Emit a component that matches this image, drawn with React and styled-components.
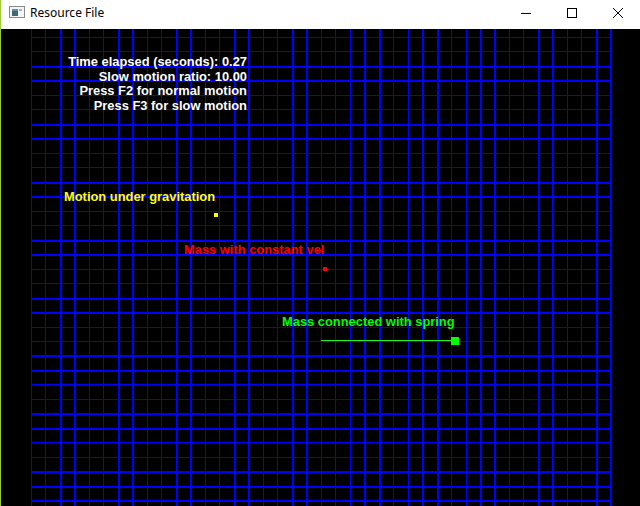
import React from 'react';
import styled, { createGlobalStyle } from 'styled-components';

/* CSS---------------------------------------------------------------------*/
const GlobalStyle = createGlobalStyle`
  html, body {
    margin: 0;
    padding: 0;
    background: #000000;
  }

  body {
    width: 640px;
    height: 506px;
    overflow: hidden;
  }
`;

// The whole window, with its thin accent border on the left
const Window = styled.div`
  width: 640px;
  height: 506px;
  box-sizing: border-box;
  border-left: 1px solid #9acd32;
  display: flex;
  flex-direction: column;
  background: #000000;
`;

const TitleBar = styled.div`
  flex: none;
  height: 29px;
  display: flex;
  align-items: flex-start;
  background: #FFFFFF;
`;

const AppIcon = styled.svg`
  flex: none;
  display: block;
  margin: 6px 0 0 8px;
`;

const Title = styled.div`
  margin: 5px 0 0 5px;
  font-family: "Noto Sans", "Open Sans", sans-serif;
  font-size: 12px;
  line-height: 16px;
  color: #000000;
`;

const Controls = styled.div`
  margin-left: auto;
  display: flex;
`;

const ControlButton = styled.div`
  width: 46px;
  height: 29px;
  box-sizing: border-box;
  padding: ${props => props.$top}px 0 0 19px;

  > svg {
    display: block;
  }
`;

// Black OpenGL-like drawing area under the title bar
const Canvas = styled.div`
  flex: 1;
  position: relative;
  overflow: hidden;
  background: #000000;
`;

const Scene = styled.svg`
  display: block;
  shape-rendering: crispEdges;
`;

// Text drawn on the canvas, placed at its scene coordinates
const Label = styled.div`
  position: absolute;
  left: ${props => props.$x}px;
  top: ${props => props.$y}px;
  color: ${props => props.$color};
  font-family: "Liberation Sans", Arial, sans-serif;
  font-weight: bold;
  font-size: 12.9px;
  line-height: 14.5px;
  white-space: nowrap;
`;

const InfoBlock = styled.div`
  position: absolute;
  top: 26px;
  right: 393px;
  text-align: right;
  color: #FFFFFF;
  font-family: "Liberation Sans", Arial, sans-serif;
  font-weight: bold;
  font-size: 12.9px;
  line-height: 14.5px;
  white-space: nowrap;
`;
/*-------------------------------------------------------------------------*/

/* Arrays------------------------------------------------------------------*/
const SCENE_W = 639;
const SCENE_H = 477;
const BLUE = '#0000FF';

const thickCols = [2, 3, 6, 7, 10, 11, 14, 15, 18, 19, 23, 24, 27, 28, 31, 32, 35, 36, 39, 40];

// vertical lines, in canvas coordinates (the canvas starts at page x 1, y 29)
const columns = Array.from({ length: 41 }, (_, i) => ({
  x: Math.floor(31.3 + 14.49 * i) - 1,
  w: thickCols.includes(i) ? 2 : 1,
}));

const rows = Array.from({ length: 33 }, (_, j) => ({
  y: Math.floor(37.4 + 14.48 * j) - 29,
  h: (j % 4 === 2 || j % 4 === 3 || j === 32) ? 2 : 1,
}));

const info = [
  'Time elapsed (seconds): 0.27',
  'Slow motion ratio: 10.00',
  'Press F2 for normal motion',
  'Press F3 for slow motion',
];

const labels = [
  { id: 1, text: 'Motion under gravitation', x: 63, y: 161, color: '#FFFF00' },
  { id: 2, text: 'Mass with constant vel', x: 183, y: 214.3, color: '#FF0000' },
  { id: 3, text: 'Mass connected with spring', x: 281, y: 286, color: '#00FF00' },
];
/*-------------------------------------------------------------------------*/

/* Functions---------------------------------------------------------------*/
const WindowIcon = () => (
  <AppIcon width="16" height="12" viewBox="0 0 16 12">
    <rect x="0.5" y="0.5" width="15" height="11" fill="#F4F4F4" stroke="#8A8A8A" />
    <rect x="3" y="3" width="6" height="7" fill="#3E6B6B" />
    <rect x="3" y="3" width="6" height="2" fill="#5E8FA8" />
    <rect x="10" y="3" width="3" height="2" fill="#9CB6C8" />
  </AppIcon>
);

const Grid = () => (
  <g fill={BLUE}>
    {columns.map(c => (
      <rect key={'c' + c.x} x={c.x} y={0} width={c.w} height={SCENE_H} />
    ))}
    {rows.map(r => (
      <rect key={'r' + r.y} x={30} y={r.y} width={581} height={r.h} />
    ))}
  </g>
);

const Masses = () => (
  <g>
    <rect x={213} y={184} width={4} height={4} fill="#FFFF00" />
    <rect x={322} y={238} width={4} height={4} fill="#FF0000" />
    <rect x={320} y={311} width={130} height={1} fill="#22EE22" />
    <rect x={450} y={308} width={8} height={8} fill="#00FF00" />
  </g>
);
/*-------------------------------------------------------------------------*/

/* Render------------------------------------------------------------------*/
const App = () => (
  <Window>
    <GlobalStyle />

    <TitleBar>
      <WindowIcon />
      <Title>Resource File</Title>
      <Controls>
        <ControlButton $top={13}>
          <svg width="10" height="1" viewBox="0 0 10 1">
            <rect x="0" y="0" width="10" height="1" fill="#000" />
          </svg>
        </ControlButton>
        <ControlButton $top={8}>
          <svg width="10" height="10" viewBox="0 0 10 10">
            <rect x="0.5" y="0.5" width="9" height="9" fill="none" stroke="#000" />
          </svg>
        </ControlButton>
        <ControlButton $top={8}>
          <svg width="10" height="10" viewBox="0 0 10 10">
            <path d="M0 0 L10 10 M10 0 L0 10" stroke="#000" strokeWidth="1" />
          </svg>
        </ControlButton>
      </Controls>
    </TitleBar>

    <Canvas>
      <Scene width={SCENE_W} height={SCENE_H} viewBox={`0 0 ${SCENE_W} ${SCENE_H}`}>
        <Grid />
        <Masses />
      </Scene>

      <InfoBlock>
        {info.map(line => <div key={line}>{line}</div>)}
      </InfoBlock>

      {labels.map(l => (
        <Label key={l.id} $x={l.x} $y={l.y} $color={l.color}>{l.text}</Label>
      ))}
    </Canvas>
  </Window>
);
/*-------------------------------------------------------------------------*/

export default App;
